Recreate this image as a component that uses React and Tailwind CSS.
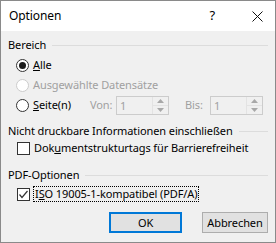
import React from 'react';

const font = { fontFamily: '"Noto Sans", "Open Sans", sans-serif', letterSpacing: '-0.1px' };

const GroupHeader = ({ label, className = '' }) => (
  <div className={`flex items-center ${className}`}>
    <span className="text-[11px] text-black whitespace-nowrap">{label}</span>
    <div className="flex-1 h-px bg-[#dcdcdc] ml-[6px]" />
  </div>
);

const Radio = ({ checked, disabled }) => (
  <span
    className={`shrink-0 w-[13px] h-[13px] rounded-full border flex items-center justify-center bg-white ${
      disabled ? 'border-[#cccccc]' : 'border-[#333333]'
    }`}
  >
    {checked && <span className="w-[7px] h-[7px] rounded-full bg-[#1a1a1a]" />}
  </span>
);

const Checkbox = ({ checked }) => (
  <span className="shrink-0 w-[13px] h-[13px] border border-[#333333] bg-white flex items-center justify-center">
    {checked && (
      <svg width="11" height="11" viewBox="0 0 11 11">
        <path d="M1.5 5.5 L4 8.5 L9.5 2" fill="none" stroke="#333333" strokeWidth="1.2" />
      </svg>
    )}
  </span>
);

const Spin = () => (
  <div className="shrink-0 w-[53px] h-[19px] border border-[#cccccc] bg-[#f0f0f0] flex">
    <span className="flex-1 pl-[3px] text-[11px] leading-[17px] text-[#a0a0a0]">1</span>
    <div className="w-[16px] flex flex-col border-l border-[#e3e3e3]">
      <div className="flex-1 flex items-center justify-center border-b border-[#e3e3e3]">
        <svg width="7" height="4" viewBox="0 0 7 4">
          <path d="M0 4 L3.5 0 L7 4 Z" fill="#a8a8a8" />
        </svg>
      </div>
      <div className="flex-1 flex items-center justify-center">
        <svg width="7" height="4" viewBox="0 0 7 4">
          <path d="M0 0 L3.5 4 L7 0 Z" fill="#a8a8a8" />
        </svg>
      </div>
    </div>
  </div>
);

const App = () => {
  return (
    <div
      className="w-[276px] h-[243px] border border-[#8a8a8a] bg-[#f0f0f0] flex flex-col overflow-hidden"
      style={font}
    >
      <div className="h-[30px] bg-white flex items-center pl-[8px] shrink-0">
        <span className="text-[12px] text-black">Optionen</span>
        <span className="ml-auto text-[13px] text-black mr-[37px]">?</span>
        <svg width="11" height="11" viewBox="0 0 11 11" className="mr-[12px]">
          <path d="M0.5 0.5 L10.5 10.5 M10.5 0.5 L0.5 10.5" stroke="#111" strokeWidth="1" />
        </svg>
      </div>

      <div className="px-[7px] pt-[4px] flex flex-col text-[11px] text-black whitespace-nowrap">
        <GroupHeader label="Bereich" className="h-[20px]" />

        <div className="h-[21px] flex items-center pl-[8px] gap-[4px]">
          <Radio checked />
          <span>
            <span className="underline">A</span>lle
          </span>
        </div>
        <div className="h-[19px] flex items-center pl-[8px] gap-[4px]">
          <Radio disabled />
          <span className="text-[#a0a0a0]">Ausgewählte Datensätze</span>
        </div>
        <div className="h-[20px] flex items-center pl-[8px]">
          <Radio />
          <span className="ml-[4px] w-[57px]">
            <span className="underline">S</span>eite(n)
          </span>
          <span className="w-[26px] text-[#a0a0a0]">Von:</span>
          <Spin />
          <span className="ml-[16px] w-[25px] text-[#a0a0a0]">Bis:</span>
          <Spin />
        </div>

        <GroupHeader label="Nicht druckbare Informationen einschließen" className="h-[19px] mt-[7px]" />
        <div className="h-[14px] flex items-center pl-[9px] gap-[4px]">
          <Checkbox />
          <span>
            Dok<span className="underline">u</span>mentstrukturtags für Barrierefreiheit
          </span>
        </div>

        <GroupHeader label="PDF-Optionen" className="h-[18px] mt-[11px]" />
        <div className="h-[16px] mt-[2px] flex items-center pl-[9px] gap-[3px]">
          <Checkbox checked />
          <span className="border border-dotted border-black px-[1px] leading-[14px]">
            I<span className="underline">S</span>O 19005-1-kompatibel (PDF/A)
          </span>
        </div>

        <div className="mt-[10px] flex justify-end gap-[20px]">
          <button className="w-[73px] h-[21px] border-2 border-[#0078d7] bg-[#e1e1e1] text-[11px] text-black leading-none">
            OK
          </button>
          <button className="w-[66px] h-[21px] border border-[#adadad] bg-[#e1e1e1] text-[11px] text-black leading-none">
            Abbrechen
          </button>
        </div>
      </div>
    </div>
  );
};

export default App;
